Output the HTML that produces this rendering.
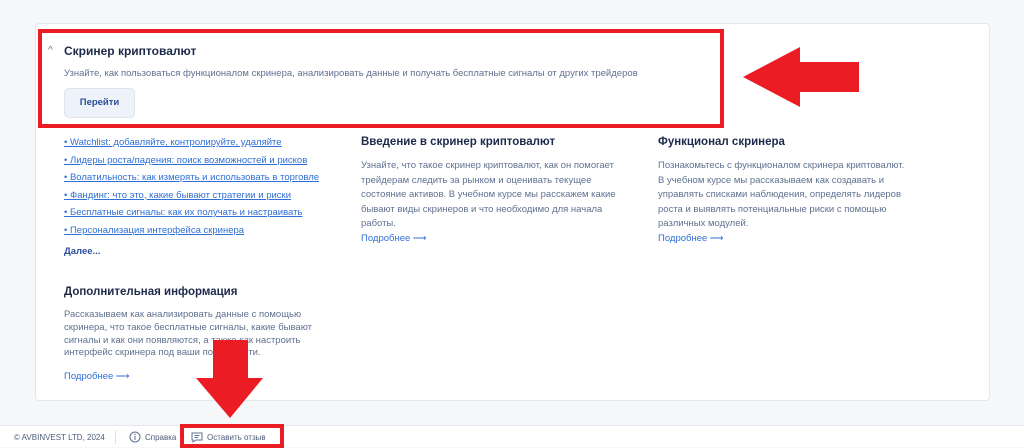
<!DOCTYPE html>
<html><head><meta charset="utf-8"><style>
*{margin:0;padding:0;box-sizing:border-box}
body{width:1024px;height:447px;background:#f6f7f9;font-family:"Liberation Sans",sans-serif;position:relative;overflow:hidden;color:#1c2a4a}
.card{position:absolute;left:35px;top:23px;width:955px;height:378px;background:#fff;border:1px solid #e3e8f0;border-radius:4px}
.abs{position:absolute}
h3{font-size:11.5px;font-weight:bold;color:#1c2a4a}
.p{font-size:9.5px;line-height:14.5px;color:#5f7190}
.more{font-size:9.5px;color:#2f6fd6}
.links a{display:block;font-size:9.5px;color:#2f6fd6;text-decoration:underline;height:17.5px}
.btn{position:absolute;left:64px;top:88px;width:71px;height:30px;background:#eef2f9;border:1px solid #dde4ef;border-radius:5px;font-size:9.5px;font-weight:bold;color:#2a4f9a;text-align:center;line-height:28px}
.footer{position:absolute;left:0;top:425px;width:1024px;height:22px;background:#fff;border-top:1px solid #e3e8f0;font-size:8px;color:#4d5d78}
</style></head><body>
<div class="card"></div>
<div class="abs" style="left:48px;top:45px;font-size:10px;color:#5f7190">^</div>
<h3 class="abs" style="left:64px;top:44px;font-size:12px">Скринер криптовалют</h3>
<div class="abs p" style="left:64px;top:67px">Узнайте, как пользоваться функционалом скринера, анализировать данные и получать бесплатные сигналы от других трейдеров</div>
<div class="btn">Перейти</div>
<div class="abs" style="left:38px;top:29px;width:686px;height:99px;border:4px solid #ec1c24"></div>
<svg class="abs" style="left:740px;top:45px" width="122" height="65"><polygon points="3,32 60,2 60,17 119,17 119,47 60,47 60,62" fill="#ec1c24"/></svg>
<div class="abs links" style="left:64px;top:137px">
<a>• Watchlist: добавляйте, контролируйте, удаляйте</a>
<a>• Лидеры роста/падения: поиск возможностей и рисков</a>
<a>• Волатильность: как измерять и использовать в торговле</a>
<a>• Фандинг: что это, какие бывают стратегии и риски</a>
<a>• Бесплатные сигналы: как их получать и настраивать</a>
<a>• Персонализация интерфейса скринера</a>
</div>
<div class="abs" style="left:64px;top:246px;font-size:9.5px;font-weight:bold;color:#2a4f9a">Далее...</div>
<h3 class="abs" style="left:361px;top:136px">Введение в скринер криптовалют</h3>
<div class="abs p" style="left:361px;top:159px;width:262px">Узнайте, что такое скринер криптовалют, как он помогает трейдерам следить за рынком и оценивать текущее состояние активов. В учебном курсе мы расскажем какие бывают виды скринеров и что необходимо для начала работы.</div>
<div class="abs more" style="left:361px;top:233px">Подробнее ⟶</div>
<h3 class="abs" style="left:658px;top:136px">Функционал скринера</h3>
<div class="abs p" style="left:658px;top:159px;width:250px">Познакомьтесь с функционалом скринера криптовалют. В учебном курсе мы рассказываем как создавать и управлять списками наблюдения, определять лидеров роста и выявлять потенциальные риски с помощью различных модулей.</div>
<div class="abs more" style="left:658px;top:233px">Подробнее ⟶</div>
<h3 class="abs" style="left:64px;top:286px">Дополнительная информация</h3>
<div class="abs p" style="left:64px;top:309px;width:262px;line-height:12.8px">Рассказываем как анализировать данные с помощью скринера, что такое бесплатные сигналы, какие бывают сигналы и как они появляются, а также как настроить интерфейс скринера под ваши потребности.</div>
<div class="abs more" style="left:64px;top:371px">Подробнее ⟶</div>
<div class="footer">
<span class="abs" style="left:14px;top:7px">© AVBINVEST LTD, 2024</span>
<span class="abs" style="left:115px;top:4px;width:1px;height:14px;background:#dde3ec"></span>
<svg class="abs" style="left:129px;top:5px" width="12" height="12"><circle cx="6" cy="6" r="5" fill="none" stroke="#5f7190"/><line x1="6" y1="5" x2="6" y2="9" stroke="#5f7190"/><circle cx="6" cy="3.3" r=".7" fill="#5f7190"/></svg>
<span class="abs" style="left:145px;top:7px">Справка</span>
<svg class="abs" style="left:191px;top:6px" width="12" height="11"><path d="M1 1h10v7H5l-3 2V8H1z" fill="none" stroke="#5f7190"/><line x1="3.5" y1="3.5" x2="8.5" y2="3.5" stroke="#5f7190"/><line x1="3.5" y1="5.5" x2="7" y2="5.5" stroke="#5f7190"/></svg>
<span class="abs" style="left:207px;top:7px">Оставить отзыв</span>
</div>
<div class="abs" style="left:180px;top:424px;width:104px;height:24px;border:4px solid #ec1c24"></div>
<svg class="abs" style="left:194px;top:338px" width="72" height="82"><polygon points="19,2 54,2 54,40 69,40 36,80 2,40 19,40" fill="#ec1c24"/></svg>
</body></html>
